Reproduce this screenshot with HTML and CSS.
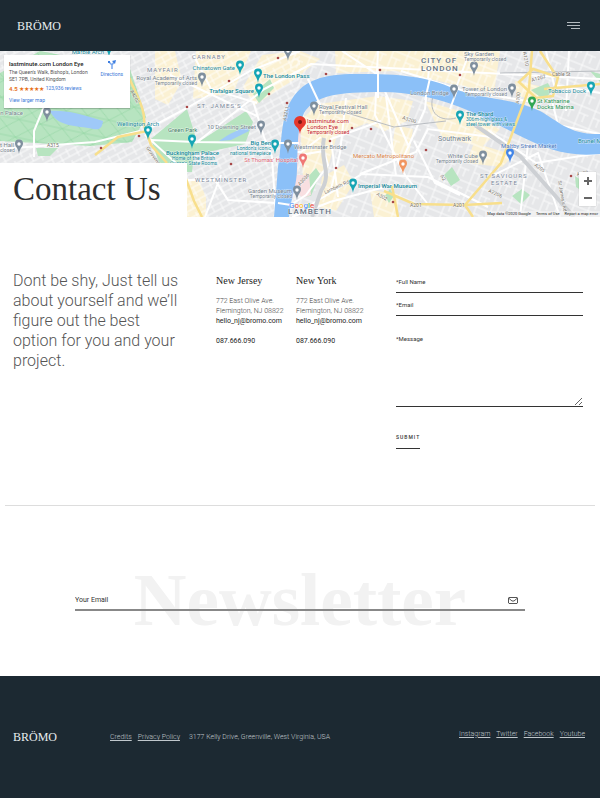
FILE: index.html
```html
<!DOCTYPE html>
<html lang="en">
<head>
<meta charset="utf-8">
<meta name="viewport" content="width=device-width, initial-scale=1">
<title>BRÖMO – Contact Us</title>
<link rel="stylesheet" href="styles.css">
</head>
<body>
<header class="site-header">
  <a class="logo" href="#">BRÖMO</a>
  <button class="menu-button" type="button" aria-label="Menu">
    <svg viewBox="0 0 13 8" width="13" height="8" aria-hidden="true"><path d="M0 .5h13M0 3.500h13M4 6.500h9"/></svg>
  </button>
</header>

<main>
  <section class="hero">
    <svg class="map" viewBox="0 0 600 166" preserveAspectRatio="xMidYMid slice" role="img" aria-label="Map of London">
      <defs>
        <pattern id="streets" width="17" height="13" patternUnits="userSpaceOnUse" patternTransform="rotate(-28)"><path d="M0 3h17M4 3v10M0 9h17M12 0v9" stroke="#fff" stroke-width=".8" fill="none"/></pattern>
        <pattern id="streets-east" width="15" height="19" patternUnits="userSpaceOnUse" patternTransform="rotate(22)"><path d="M0 4h15M5 0v19M5 11h10M11 11v8" stroke="#fff" stroke-width=".8" fill="none"/></pattern>
        <pattern id="paths" width="22" height="18" patternUnits="userSpaceOnUse" patternTransform="rotate(12)"><path d="M0 0l22 18M22 0L0 18M0 9h22" stroke="#8fd3a0" stroke-width=".6" fill="none"/></pattern>
        <g id="pin"><path d="M0 7C-1 0-4-.4-4-3.600a4 4 0 0 1 8 0C4-.4 1 0 0 7z" transform="translate(0 -1)"/><circle cy="-4" r="1.700" fill="#fff"/></g>
      </defs>
      <rect width="600" height="166" fill="#e6e7e9"/>
      <g fill="#fbf1d3">
        <path d="M155 0l20 0 7 30-14 24-13-6zM196 0h55l-18 42-40 6zM262 4l38-4 20 8-25 20-40 26-12-18z"/>
        <path d="M335 0h70l45 6 14 16-8 12-60-14-60 2zM410 0h90l-6 42-44-10zM300 70l18-17 60-8 35 5-6 20-22 10-18-8-30 12-10 36-24 6zM425 50l35 10 40 18-18 18-40-10zM186 128l12 0 8 18 0 20h-20zM322 126l22-12 10 18-18 28-18-4zM395 74l18 4-4 26-18 4zM370 139l28 4v23h-24zM96 124l24-12 12 14zM515 30l24 5 8 16-30-6zM474 92l40 12-12 12-36-4z"/>
      </g>
      <rect width="300" height="166" fill="url(#streets)"/>
      <rect x="290" width="310" height="166" fill="url(#streets-east)"/>
      <path d="M0 22L40 0l90 18 16 48-14 25-42 4L0 90zM151 88L187 58l9 29-4 34h-30zM194 94l52-34 7 11-8 22-42 9-10-2zM253 43l17-15 4 9-15 15zM306 128l10-11 4 6-9 22-7 1zM36 97h22l-8 8H38zM281 142l5-18 2 11zM520 66l16 4 4 7-17-3zM444 124l8-8 8 13-9 6zM512 145l10-7 8 6-9 9zM531 39l17-7 4 8-8 9zM590 20l10 3v8zM575 125l13 9v10l-12-8zM385 145l5-7 4 7-5 7z" fill="#b7e4c0"/>
      <path d="M0 22L40 0l90 18 16 48-14 25-42 4L0 90z" fill="url(#paths)"/>
      <path d="M50 60c16-1 31 3 53 10-1 8-4 9-10 8-16-4-35-1-43-18zM219 90c12-8 18-11 28-14l2 4-18 9z" fill="#9fc9f8"/>
      <path d="M289 76l12 3-4 45h12l2 20-8 3-10-9z" fill="#f8dfe1"/>
      <path class="roads" d="M0 98l95-7 45-11M34 106L34 80 52 36 82 0M140 82L187 57 250 20 300 0M151 89l43 2 82 1M145 84l42 38M196 92l67-53M253 50l11 36 8 20 4 60M170 24L257 65M193 3l18 35 46 14M186 129h29l13 20 64 4M281 101h20l20-15M308 28l17 37M257 42L311 13 600 28M378 0l-3 64 30 60 22 28M401 20l60 19 72 12M430 8l-5 50-24 54M454 42L470 0M312 153l50-30 66 3 60 30M338 146L331 88l50-18M360 123l56-22 12-23 71 9M414 90l21 42 25 12M488 79l48 33 64-10M528 93l-8 73M342 0l36 24 30 70M494 124l44-22 22 64M546 0l8 34 46 8M569 0l-3 60M292 166l38-15 62-17M205 166l16-42M300 104l24-4 4 14-22 30-20 13M346 47l-6 55-10 40M386 45l10 80M552 50l6 24 42 9"/>
      <path d="M324 87c-5 25 9 34-3 53l-9 26M475 74l45 31 54 61" fill="none" stroke="#cdd0d4" stroke-width="4"/>
      <path d="M434 42c-8 22 8 29 22 25M300 48l94 28 52-6M500 22l100-2" fill="none" stroke="#b9bdc2" stroke-width="1"/>
      <path d="M600 83C570 84 558 70 540 60 512 47 480 48 455 38 425 25 402 23 356 23 323 23 304 29 292 48 280 66 282 95 278 116L274 166h15c2-20 8-32 8-48 1-25 0-42 7-56 11-18 34-21 78-21 57 1 92 20 134 42 32 16 52 23 84 20z" fill="#8bc0f8"/>
      <path d="M308 28l16 34M279 92h20M278 152l13 2M378 20v27M430 27l-5 22M458 36l-8 22" fill="none" stroke="#fff" stroke-width="2"/>
      <path d="M128 24c8 20 18 34 16 50l7 20 16 18M95 104l23-18 34-7M186 128l8 22 8 16M532 0l-3 38-28 74-36 42 8 12M384 140l30 13 50 1 38-2M392 135l6 31M519 31l14-13 25 8-5 19-17 2zM540 0l17 26M544 38l56-5" fill="none" stroke="#f8df8c" stroke-width="2.500"/>
      <g fill="#a84848"><circle cx="278" cy="7" r="1.300"/><circle cx="229" cy="30" r="1.300"/><circle cx="187" cy="56" r="1.300"/><circle cx="269" cy="43" r="1.300"/><circle cx="287" cy="52" r="1.300"/><circle cx="326" cy="23" r="1.300"/><circle cx="380" cy="19" r="1.300"/><circle cx="460" cy="24" r="1.300"/><circle cx="101" cy="97" r="1.300"/><circle cx="139" cy="85" r="1.300"/><circle cx="231" cy="113" r="1.300"/><circle cx="330" cy="90" r="1.300"/><circle cx="371" cy="78" r="1.300"/><circle cx="352" cy="77" r="1.300"/><circle cx="336" cy="117" r="1.300"/><circle cx="426" cy="99" r="1.300"/><circle cx="571" cy="125" r="1.300"/><circle cx="393" cy="151" r="1.300"/></g>
      <g class="pins">
        <g fill="#16a5b5"><use href="#pin" x="109" y="0"/><use href="#pin" x="240" y="18"/><use href="#pin" x="258" y="26"/><use href="#pin" x="259" y="41"/><use href="#pin" x="148" y="83"/><use href="#pin" x="192" y="92"/><use href="#pin" x="275" y="97"/><use href="#pin" x="353" y="136"/><use href="#pin" x="460" y="68"/><use href="#pin" x="591" y="39"/></g>
        <g fill="#7f8f9e"><use href="#pin" x="288" y="4"/><use href="#pin" x="202" y="30"/><use href="#pin" x="47" y="65"/><use href="#pin" x="19" y="97"/><use href="#pin" x="261" y="78"/><use href="#pin" x="314" y="59"/><use href="#pin" x="288" y="97"/><use href="#pin" x="297" y="143"/><use href="#pin" x="474" y="19"/><use href="#pin" x="454" y="42"/><use href="#pin" x="512" y="41"/><use href="#pin" x="483" y="108"/></g>
        <use href="#pin" x="303" y="111" fill="#ef7775"/><use href="#pin" x="403" y="117" fill="#f19561"/><use href="#pin" x="532" y="54" fill="#30a653"/><use href="#pin" x="510" y="106" fill="#4285e8"/>
        <path d="M300 83c-1-8-6-7-6-12a6 6 0 0 1 12 0c0 5-5 4-6 12z" fill="#e5372c"/><circle cx="300" cy="71" r="2" fill="#7c1713"/>
      </g>
      <g class="labels">
        <g class="district"><text x="192" y="8">CARNABY</text><text x="147" y="21">MAYFAIR</text><text x="197" y="57">ST. JAMES'S</text><text x="195" y="131">WESTMINSTER</text><text x="480" y="127">ST SAVIOURS</text><text x="491" y="134">ESTATE</text></g>
        <g class="area"><text x="421" y="12">CITY OF</text><text x="421" y="20">LONDON</text><text x="288" y="163">LAMBETH</text></g>
        <g class="place"><text class="end" x="104" y="3">Marble Arch</text><text class="end" x="235" y="19">Chinatown Gate</text><text x="117" y="75">Wellington Arch</text><text class="end" x="586" y="42">Tobacco Dock</text><text x="578" y="92">Brunel Museum</text><text class="strong" x="263" y="27">The London Pass</text><text class="strong end" x="254" y="42">Trafalgar Square</text><text class="strong end" x="271" y="94">Big Ben</text><text class="strong" x="166" y="104">Buckingham Palace</text><text class="strong" x="358" y="137">Imperial War Museum</text><text class="strong" x="466" y="65">The Shard</text>
          <g class="tiny"><text class="end" x="271" y="99">London's iconic</text><text class="end" x="271" y="104">national timepiece</text><text x="172" y="109">Home of the British</text><text x="170" y="114">Queen's State Rooms</text><text x="466" y="70">306m-high glass &amp;</text><text x="466" y="75">steel tower with views</text></g></g>
        <g class="muted"><text class="end" x="197" y="29">Royal Academy of Arts</text><text class="end" x="23" y="64">on Palace</text><text class="end" x="14" y="96">rt Hall</text><text class="end" x="256" y="78">10 Downing Street</text><text x="319" y="58">Royal Festival Hall</text><text x="294" y="98">Westminster Bridge</text><text class="end" x="292" y="142">Garden Museum</text><text x="464" y="5">Sky Garden</text><text class="end" x="507" y="40">Tower of London</text><text class="end" x="449" y="44">London Bridge</text><text class="end" x="478" y="107">White Cube</text><text class="southwark" x="438" y="90">Southwark</text>
          <g class="tiny"><text class="end" x="197" y="34">Temporarily closed</text><text x="319" y="63">Temporarily closed</text><text class="end" x="292" y="147">Temporarily closed</text><text x="464" y="10">Temporarily closed</text><text class="end" x="507" y="45">Temporarily closed</text><text class="end" x="478" y="112">Temporarily closed</text><text x="0" y="101">closed</text></g></g>
        <g class="route"><text x="47" y="96">A315</text><text x="410" y="156">A201</text><text x="453" y="156">A201</text><text transform="translate(519 53) rotate(-83)">A100</text><text transform="translate(523 1) rotate(80)">A1210</text><text transform="translate(532 31) rotate(-17)">A1202</text><text transform="translate(130 40) rotate(62)">A4202</text><text transform="translate(146 97) rotate(55)">Grosvenor</text><text transform="translate(286 70) rotate(-78)">A3211</text><text transform="translate(300 135) rotate(-48)">A3036</text><text transform="translate(325 143) rotate(-24)">Lambeth Rd</text><text transform="translate(402 68) rotate(18)">A3200</text><text transform="translate(376 144) rotate(30)">A302</text><text transform="translate(440 125) rotate(55)">A2</text><text transform="translate(488 141) rotate(24)">A2206</text><text transform="translate(534 115) rotate(34)">A205</text><text transform="translate(577 125) rotate(-10)">A100</text><text x="552" y="25">Cable St</text><text transform="translate(558 130) rotate(80)">St James's Rd</text></g>
        <text x="168" y="81" fill="#477d68">Green Park</text><text x="537" y="52" fill="#299353">St Katharine</text><text x="537" y="58" fill="#299353">Docks Marina</text><text x="501" y="97" fill="#4f79bb">Maltby Street Market</text><text class="end" x="298" y="111" fill="#dd6572">St Thomas' Hospital</text><text x="353" y="107" fill="#d98349">Mercato Metropolitano</text>
        <g fill="#c5221f"><text x="307" y="72">lastminute.com</text><text x="307" y="78">London Eye</text><text class="tiny" x="307" y="83">Temporarily closed</text></g>
        <text class="google" x="289" y="157"><tspan fill="#4285f4">G</tspan><tspan fill="#ea4335">o</tspan><tspan fill="#fbbc05">o</tspan><tspan fill="#4285f4">g</tspan><tspan fill="#34a853">l</tspan><tspan fill="#ea4335">e</tspan></text>
      </g>
    </svg>
    <div class="place-card">
      <div class="place-info">
        <strong>lastminute.com London Eye</strong>
        <p>The Queen's Walk, Bishop's, London<br>SE1 7PB, United Kingdom</p>
        <p class="rating"><b>4.5</b><span class="stars">★★★★★</span><a href="#">123,936 reviews</a></p>
        <a href="#">View larger map</a>
      </div>
      <a class="directions" href="#"><svg viewBox="0 0 8 9" width="8" height="9" aria-hidden="true"><path d="M4 9V5L1 2M4 5l2-3" fill="none" stroke="#78a7ee" stroke-width="1.500"/><path d="M4 1l4-1-1 4zM0 1h2v2H0z" fill="#3d7de0"/></svg>Directions</a>
    </div>
    <div class="zoom-control">
      <button type="button" aria-label="Zoom in"><svg viewBox="0 0 8 8" width="8" height="8"><path d="M0 4h8M4 0v8"/></svg></button>
      <button type="button" aria-label="Zoom out"><svg viewBox="0 0 8 8" width="8" height="8"><path d="M0 4h8"/></svg></button>
    </div>
    <div class="map-credit"><span>Map data ©2020 Google</span><a href="#">Terms of Use</a><a href="#">Report a map error</a></div>
    <h1>Contact Us</h1>
  </section>

  <section class="contact">
    <p class="intro">Dont be shy, Just tell us about yourself and we’ll figure out the best option for you and your project.</p>
    <address>
      <h2>New Jersey</h2>
      <p>772 East Olive Ave.<br>Flemington, NJ 08822</p>
      <a href="mailto:hello_nj@bromo.com">hello_nj@bromo.com</a>
      <a class="phone" href="tel:087666090">087.666.090</a>
    </address>
    <address>
      <h2>New York</h2>
      <p>772 East Olive Ave.<br>Flemington, NJ 08822</p>
      <a href="mailto:hello_nj@bromo.com">hello_nj@bromo.com</a>
      <a class="phone" href="tel:087666090">087.666.090</a>
    </address>
    <form class="contact-form">
      <input type="text" placeholder="*Full Name" aria-label="Full Name">
      <input type="email" placeholder="*Email" aria-label="Email">
      <textarea placeholder="*Message" aria-label="Message"></textarea>
      <button type="submit">SUBMIT</button>
    </form>
  </section>

  <section class="newsletter">
    <h2>Newsletter</h2>
    <form class="newsletter-form">
      <input type="email" placeholder="Your Email" aria-label="Your Email">
      <button type="submit" aria-label="Subscribe"><svg viewBox="0 0 10 7" width="10" height="7"><path d="M1 .5h8l.5.5v5l-.5.5H1L.5 6V1zM.5 1L4 4h2l3.500-3"/></svg></button>
    </form>
  </section>
</main>

<footer class="site-footer">
  <a class="logo" href="#">BRÖMO</a>
  <div class="legal"><a href="#">Credits</a><a href="#">Privacy Policy</a><span>3177 Kelly Drive, Greenville, West Virginia, USA</span></div>
  <nav class="social"><a href="#">Instagram</a><a href="#">Twitter</a><a href="#">Facebook</a><a href="#">Youtube</a></nav>
</footer>
</body>
</html>
```
FILE: styles.css
```css
* { box-sizing: border-box; }
body { margin: 0; background: #fff; color: #333; font-family: Roboto, "Open Sans", sans-serif; font-size: 7px; line-height: 10px; }
h1, h2, p { margin: 0; font-weight: 400; }
a { color: inherit; text-decoration: none; }
button, input, textarea { font: inherit; color: inherit; background: none; border: 0; border-radius: 0; padding: 0; margin: 0; outline: 0; }
button { cursor: pointer; }
svg { display: block; }
h1, h2, .logo { font-family: "Liberation Serif", serif; }
.logo { color: #e8edf0; font-size: 12px; line-height: 16px; }

.site-header { display: flex; align-items: center; justify-content: space-between; height: 51px; padding: 0 20px 0 17px; background: #1c2932; }
.menu-button path { stroke: #b4bbc0; stroke-width: 1; fill: none; }

.hero { position: relative; }
.map { width: 100%; height: 166px; }
.roads { fill: none; stroke: #fff; stroke-width: 2; }
.labels { font-size: 6px; fill: #53606b; paint-order: stroke; stroke: #fff; stroke-opacity: .6; stroke-width: 1px; }
.end { text-anchor: end; }
.district { letter-spacing: 1px; fill: #7a8799; }
.area { font-size: 8px; letter-spacing: 1px; font-weight: 500; fill: #667384; }
.place { fill: #16899a; }
.strong { font-weight: 500; }
.muted { fill: #77848f; }
.southwark { font-size: 7px; }
.tiny, .tiny text { font-size: 5px; font-weight: 400; }
.route { font-size: 5px; fill: #777268; }
.google { font-size: 8px; }
.hero h1 { position: absolute; left: 0; bottom: 0; padding: 6px 26px 7px 13px; background: #fff; color: #2d2d2d; font-size: 33px; line-height: 41px; }
.place-card { position: absolute; top: 4px; left: 4px; display: flex; justify-content: space-between; width: 126px; height: 53px; padding: 5px 7px 4px 5px; background: #fff; box-shadow: 0 1px 1px #0003; font-size: 5px; line-height: 7px; color: #555; white-space: nowrap; }
.place-info strong { display: block; margin-bottom: 2px; font-size: 6px; font-weight: 500; color: #222; }
.place-card a { color: #3b78d8; }
.place-info .rating { display: flex; margin: 2px 0 5px; }
.rating b, .stars { color: #e7711b; }
.rating b { font-size: 6px; margin-right: 1px; }
.stars { font-size: 6px; margin-right: 2px; }
.place-card .directions { display: flex; flex-direction: column; align-items: center; gap: 2px; }
.zoom-control { position: absolute; right: 4px; bottom: 11px; display: grid; grid-template-rows: 17px 17px; width: 17px; background: #fff; box-shadow: 0 0 1px #0004; }
.zoom-control button { display: grid; place-items: center; }
.zoom-control path { stroke: #666; stroke-width: 2; }
.map-credit { position: absolute; right: 0; bottom: 0; display: flex; gap: 5px; padding: 0 2px; background: #f5f5f5aa; font-size: 4px; line-height: 6px; color: #222; }

.contact { display: grid; grid-template-columns: 203fr 80fr 100fr 187fr; margin: 0 5px; padding: 53px 12px 56px 8px; border-bottom: 1px solid #ddd; }
.intro { padding-top: 1px; color: #555; font-size: 16px; line-height: 20px; font-weight: 300; max-width: 168px; }
address { padding-top: 6px; font-style: normal; white-space: nowrap; }
address h2 { margin-bottom: 10px; color: #222; font-size: 10px; line-height: 10px; }
address p { color: #444; font-weight: 300; }
address a { display: block; color: #222; }
address .phone { margin-top: 10px; }
.contact-form { display: flex; flex-direction: column; align-items: flex-start; font-size: 6px; }
.contact-form input, .contact-form textarea { width: 100%; border-bottom: 1px solid #333; }
.contact-form input { height: 23px; }
.contact-form textarea { height: 76px; margin-top: 15px; padding-top: 3px; line-height: 10px; resize: vertical; }
.contact-form button { margin-top: 25px; padding-bottom: 6px; border-bottom: 1px solid #333; font-size: 5px; font-weight: 500; letter-spacing: 1px; }
::placeholder { color: #333; opacity: 1; }

.newsletter { display: grid; align-items: center; justify-items: center; padding: 58px 75px 38px; }
.newsletter h2, .newsletter-form { grid-area: 1 / 1; }
.newsletter h2 { color: #f2f2f2; font-size: 73px; line-height: 74px; font-weight: 700; }
.newsletter-form { position: relative; display: flex; align-items: center; width: 100%; padding-right: 7px; border-bottom: 2px solid #888; }
.newsletter-form input { flex: 1; height: 18px; }
.newsletter-form path { fill: none; stroke: #555; stroke-width: 1; }

.site-footer { display: flex; align-items: center; min-height: 122px; padding: 0 15px 0 13px; background: #1c2932; color: #c0c7cc; font-weight: 300; }
.site-footer .logo { flex: 0 0 97px; font-weight: 400; }
.legal, .social { display: flex; gap: 6px; white-space: nowrap; }
.legal span { margin-left: 3px; }
.legal a, .social a { text-decoration: underline; }
.social { margin-left: auto; padding-bottom: 7px; }
```
